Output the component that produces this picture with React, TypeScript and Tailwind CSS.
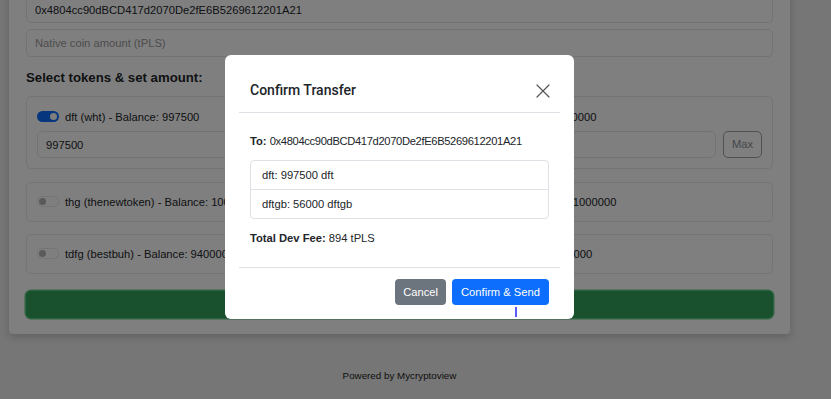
import { X } from "lucide-react"

const Toggle = ({ on }: { on: boolean }) => {
  if (on) {
    return (
      <span className="flex h-[11px] w-[22px] shrink-0 items-center justify-end rounded-full bg-[#0d6efd] px-[2px]">
        <span className="h-[7px] w-[7px] rounded-full bg-white" />
      </span>
    )
  }
  return (
    <span className="flex h-[11px] w-[22px] shrink-0 items-center rounded-full border border-[#e6e8ea] bg-white px-[1px]">
      <span className="h-[7px] w-[7px] rounded-full bg-[#b4b4b4]" />
    </span>
  )
}

const TokenRow = ({
  left,
  right,
  leftOn,
  rightOn,
  tall,
}: {
  left: string
  right: string
  leftOn: boolean
  rightOn: boolean
  tall?: boolean
}) => {
  return (
    <div className={tall ? "grid h-[20px] grid-cols-[371px_1fr] items-center" : "grid h-[18px] grid-cols-[371px_1fr] items-center"}>
      <div className="flex items-center gap-[6px] whitespace-nowrap">
        <Toggle on={leftOn} />
        {left}
      </div>
      <div className="flex items-center gap-[6px] whitespace-nowrap">
        <Toggle on={rightOn} />
        {right}
      </div>
    </div>
  )
}

const App = () => {
  return (
    <div className="relative flex min-h-screen w-full flex-col overflow-hidden bg-[#ececec] font-['Liberation_Sans',Arial,sans-serif] text-[11.2px] text-[#212529]">
      <div className="flex w-[799px] flex-col">
        {/* form card, scrolled so its top is off screen */}
        <div className="mx-[9px] -mt-[21px] flex flex-col rounded-[4px] bg-white px-[17px] pt-[17px] pb-[16px] shadow-[0_3px_8px_rgba(0,0,0,0.18)]">
          <input
            readOnly
            value="0x4804cc90dBCD417d2070De2fE6B5269612201A21"
            className="h-[27px] w-full rounded-[5px] border border-[#e3e6e9] px-[8px] text-[11.2px] text-[#212529] outline-none"
          />
          <input
            readOnly
            placeholder="Native coin amount (tPLS)"
            className="mt-[6px] h-[28px] w-full rounded-[5px] border border-[#e3e6e9] px-[8px] text-[11.2px] outline-none placeholder:text-[#9a9a9a]"
          />
          <div className="mt-[12px] text-[13.2px] leading-[18px] font-bold text-[#212529]">Select tokens &amp; set amount:</div>

          <div className="mt-[9px] rounded-[5px] border border-[#e6e8ea] p-[10px]">
            <TokenRow tall leftOn rightOn left="dft (wht) - Balance: 997500" right="dftgb (dftgb) - Balance: 1000000" />
            <div className="mt-[4px] flex gap-[7px]">
              <input
                readOnly
                value="997500"
                className="h-[27px] flex-1 rounded-[5px] border border-[#e3e6e9] px-[8px] text-[11.2px] text-[#212529] outline-none"
              />
              <button className="h-[27px] w-[39px] rounded-[5px] border border-[#9ca1a6] text-[11.2px] text-[#8a8f94]">Max</button>
            </div>
          </div>

          <div className="mt-[13px] rounded-[5px] border border-[#e6e8ea] p-[10px]">
            <TokenRow leftOn={false} rightOn={false} left="thg (thenewtoken) - Balance: 1000000" right="abcd (testtoken) - Balance: 1000000" />
          </div>

          <div className="mt-[12px] rounded-[5px] border border-[#e6e8ea] p-[10px]">
            <TokenRow leftOn={false} rightOn={false} left="tdfg (bestbuh) - Balance: 9400000" right="gbx (gbtkn) - Balance: 9400000" />
          </div>

          <button aria-label="Transfer" className="mt-[17px] h-[27px] w-full rounded-[5px] bg-[#32a05c] ring-[1.5px] ring-[#5cc884]" />
        </div>

        <div className="mt-[35px] text-center text-[9.8px] leading-[14px] text-[#222]">Powered by Mycryptoview</div>
      </div>

      {/* modal backdrop */}
      <div className="fixed inset-0 bg-black/50">
        <div className="flex w-[799px] justify-center pt-[55px]">
          <div className="relative w-[349px] rounded-[6px] bg-white px-[14px] pt-[14px] pb-[14px]">
            <div className="flex h-[44px] items-center justify-between border-b border-[#dee2e6] px-[11px]">
              <div className="font-['Roboto',Arial,sans-serif] text-[14px] leading-[21px] font-medium text-[#212529]">Confirm Transfer</div>
              <X size={24} strokeWidth={1.2} className="-mr-[6px] text-[#555]" />
            </div>

            <div className="px-[11px] pt-[20px] pb-[20px]">
              <div className="leading-[17px]">
                <span className="font-bold">To:</span>{" "}
                <span className="tracking-[-0.35px]">0x4804cc90dBCD417d2070De2fE6B5269612201A21</span>
              </div>
              <div className="mt-[10px] rounded-[4px] border border-[#dee2e6]">
                <div className="border-b border-[#dee2e6] px-[11px] py-[5.6px] leading-[16.8px]">dft: 997500 dft</div>
                <div className="px-[11px] py-[5.6px] leading-[16.8px]">dftgb: 56000 dftgb</div>
              </div>
              <div className="mt-[11px] leading-[17px]">
                <span className="font-bold">Total Dev Fee:</span> 894 tPLS
              </div>
            </div>

            <div className="flex justify-end gap-[6px] border-t border-[#dee2e6] px-[11px] pt-[11px]">
              <button className="h-[26px] rounded-[4px] bg-[#6c757d] px-[8px] text-[11.2px] text-white">Cancel</button>
              <button className="h-[26px] rounded-[4px] bg-[#0d6efd] px-[9px] text-[11.2px] text-white">Confirm &amp; Send</button>
            </div>

            {/* mouse text cursor */}
            <div className="absolute top-[252px] left-[290px] h-[10px] w-[2px] bg-[#5a5aff]" />
          </div>
        </div>
      </div>
    </div>
  )
}

export default App
